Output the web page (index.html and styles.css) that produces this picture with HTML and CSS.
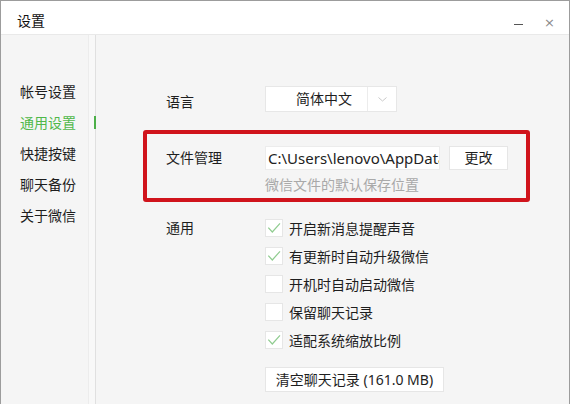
FILE: index.html
```html
<!DOCTYPE html>
<html lang="zh-CN">
<head>
    <meta charset="UTF-8">
    <title>设置</title>
    <link rel="stylesheet" href="styles.css">
</head>
<body>
    <div class="window">
        <div class="titlebar">
            <span class="title">设置</span>
            <span class="btn-min"></span>
            <span class="btn-close">×</span>
        </div>
        <div class="main">
            <div class="sidebar">
                <div class="nav-item">帐号设置</div>
                <div class="nav-item active">通用设置</div>
                <div class="nav-item">快捷按键</div>
                <div class="nav-item">聊天备份</div>
                <div class="nav-item">关于微信</div>
            </div>
            <div class="divider"></div>
            <div class="content">
                <div class="row lang-row">
                    <div class="label">语言</div>
                    <div class="select">
                        <span class="select-text">简体中文</span>
                        <span class="select-arrow">
                            <svg width="9" height="5" viewBox="0 0 9 5"><polyline points="0.5,0.5 4.5,4 8.5,0.5" fill="none" stroke="#c9c9c9" stroke-width="1"/></svg>
                        </span>
                    </div>
                </div>

                <div class="file-box">
                    <div class="row file-row">
                        <div class="label">文件管理</div>
                        <div class="path"><span class="path-text">C:\Users\lenovo\AppData</span></div>
                        <div class="btn btn-change">更改</div>
                    </div>
                    <div class="hint">微信文件的默认保存位置</div>
                </div>

                <div class="row general-row">
                    <div class="label">通用</div>
                    <div class="checks">
                        <div class="check"><span class="box on"></span>开启新消息提醒声音</div>
                        <div class="check"><span class="box on"></span>有更新时自动升级微信</div>
                        <div class="check"><span class="box"></span>开机时自动启动微信</div>
                        <div class="check"><span class="box"></span>保留聊天记录</div>
                        <div class="check"><span class="box on"></span>适配系统缩放比例</div>
                        <div class="btn btn-clear">清空聊天记录 (161.0 MB)</div>
                    </div>
                </div>
            </div>
        </div>
    </div>
</body>
</html>
```

FILE: styles.css
```css
body {
    margin: 0;
    padding: 0;
    background-color: #f5f5f5;
    font-family: "Noto Sans", "Noto Sans CJK SC", sans-serif;
    font-size: 14px;
    color: #1e1e1e;
}
.window {
    width: 570px;
    height: 404px;
    box-sizing: border-box;
    border: 1px solid #9c9c9c;
    border-bottom: none;
    background-color: #f5f5f5;
    display: flex;
    flex-direction: column;
    overflow: hidden;
}
.titlebar {
    height: 33px;
    background-color: #ffffff;
    border-bottom: 1px solid #e9e9e9;
    display: flex;
    align-items: center;
    padding-left: 16px;
}
.title {
    font-size: 14px;
    color: #111;
    line-height: 20px;
    margin-top: 6px;
    flex: 1;
}
.btn-min {
    width: 9px;
    height: 1px;
    background-color: #555;
    margin-top: 13px;
    margin-right: 21px;
}
.btn-close {
    font-family: "DejaVu Sans", sans-serif;
    font-size: 13px;
    color: #8a8a8a;
    line-height: 14px;
    margin-top: 11px;
    margin-right: 14px;
}
.main {
    flex: 1;
    display: flex;
}
.sidebar {
    width: 87px;
    padding-top: 41px;
    border-right: 1px solid #ececec;
}
.nav-item {
    position: relative;
    height: 31px;
    line-height: 31px;
    padding-left: 19px;
    color: #1e1e1e;
}
.nav-item.active {
    color: #4fb84a;
}
.nav-item.active::after {
    content: "";
    position: absolute;
    right: -8px;
    top: 9px;
    width: 2px;
    height: 13px;
    background-color: #4caf48;
}
.divider {
    width: 6px;
    background-color: #f8f8f8;
    border-right: 1px solid #e0e0e0;
}
.content {
    flex: 1;
    padding: 51px 0 0 47px;
}
.row {
    display: flex;
    padding-left: 23px;
}
.label {
    width: 99px;
    flex-shrink: 0;
}
.lang-row .label {
    line-height: 26px;
    padding-top: 3px;
}
.select {
    width: 132px;
    height: 26px;
    box-sizing: border-box;
    background-color: #ffffff;
    border: 1px solid #e7e7e7;
    display: flex;
}
.select-text {
    width: 86px;
    padding-left: 15px;
    border-right: 1px solid #ececec;
    line-height: 24px;
    text-align: center;
}
.select-arrow {
    flex: 1;
    display: flex;
    align-items: center;
    justify-content: center;
}
.file-box {
    width: 387px;
    box-sizing: border-box;
    margin-top: 15px;
    border: 4px solid #d0141c;
    border-radius: 3px;
    padding: 12px 0 3px 0;
}
.file-row {
    padding-left: 19px;
    align-items: center;
}
.file-row .label {
    line-height: 24px;
}
.path {
    width: 175px;
    height: 24px;
    box-sizing: border-box;
    background-color: #ffffff;
    border: 1px solid #ececec;
    padding-left: 2px;
    font-size: 15px;
    line-height: 22px;
    white-space: nowrap;
    overflow: hidden;
    color: #222;
}
.btn {
    background-color: #ffffff;
    border: 1px solid #e6e6e6;
    box-sizing: border-box;
    text-align: center;
    color: #1e1e1e;
}
.btn-change {
    width: 59px;
    height: 24px;
    line-height: 22px;
    margin-left: 9px;
}
.hint {
    margin-top: 5px;
    padding-left: 118px;
    line-height: 20px;
    color: #a9a9a9;
}
.general-row {
    margin-top: 12px;
}
.general-row .label {
    line-height: 28px;
}
.checks {
    display: flex;
    flex-direction: column;
    align-items: flex-start;
}
.check {
    height: 28px;
    display: flex;
    align-items: center;
}
.box {
    width: 18px;
    height: 18px;
    box-sizing: border-box;
    background-color: #ffffff;
    border: 1px solid #e6e6e6;
    margin-right: 6px;
}
.box.on {
    background: #ffffff url("data:image/svg+xml,%3Csvg xmlns='http://www.w3.org/2000/svg' width='16' height='16' viewBox='0 0 16 16'%3E%3Cpolyline points='2.3,7.7 6.3,12 14,3.3' fill='none' stroke='%2390cc90' stroke-width='1.2'/%3E%3C/svg%3E") no-repeat center;
}
.btn-clear {
    margin-top: 13px;
    width: 179px;
    height: 25px;
    line-height: 23px;
    white-space: nowrap;
}
```
